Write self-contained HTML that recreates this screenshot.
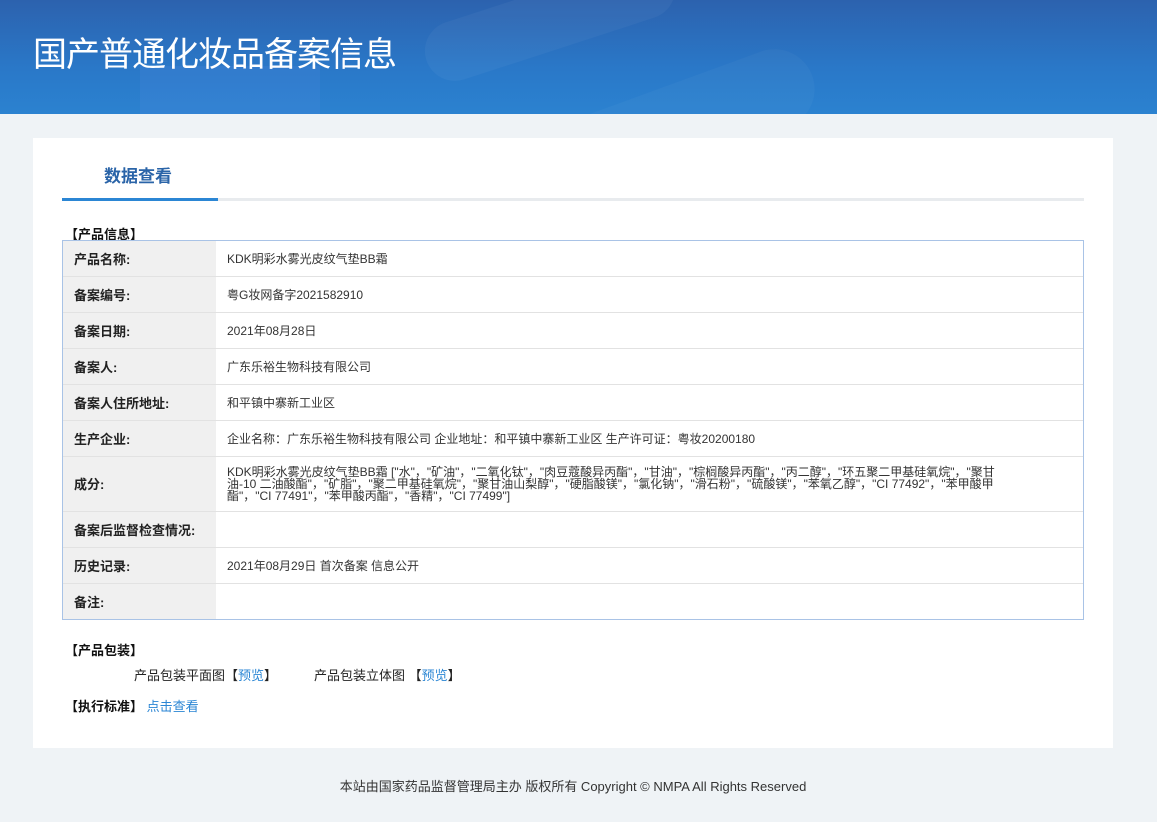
<!DOCTYPE html>
<html><head><meta charset="utf-8"><style>
*{margin:0;padding:0;box-sizing:border-box}
body{width:1157px;height:822px;background:#eff3f6;font-family:"Liberation Sans","Noto Sans CJK SC",sans-serif;position:relative;overflow:hidden;color:#333}
.hd{position:absolute;left:0;top:0;width:1157px;height:114px;background:linear-gradient(180deg,#2c62ae 0%,#2a78c8 60%,#2b82d0 100%);overflow:hidden}
.hd .s1{position:absolute;left:420px;top:-10px;width:260px;height:60px;border-radius:40px;background:rgba(255,255,255,.04);transform:rotate(-18deg)}
.hd .s2{position:absolute;left:140px;top:66px;width:180px;height:60px;background:rgba(90,140,230,.18)}
.hd .s4{position:absolute;left:560px;top:80px;width:260px;height:80px;border-radius:50px;background:rgba(255,255,255,.03);transform:rotate(-20deg)}
.hd h1{position:absolute;left:33px;top:27px;font-size:34px;font-weight:normal;color:#fff;letter-spacing:-1px}
.card{position:absolute;left:33px;top:138px;width:1080px;height:610px;background:#fff}
.tab{position:absolute;left:71px;top:24px;font-size:17px;font-weight:bold;color:#2a64a8}
.line{position:absolute;left:29px;top:60px;width:1022px;height:3px;background:#e8ebee}
.line i{position:absolute;left:0;top:0;width:156px;height:3px;background:#2b86d4}
.sec{position:absolute;font-size:13px;font-weight:bold;color:#111}
.tw{position:absolute;left:29px;top:102px;width:1022px;border:1px solid #a9c3e6}
table{width:100%;border-collapse:collapse}
td{border-top:1px solid #e2e2e2;font-size:12px;height:36px;vertical-align:middle}
tr:first-child td{border-top:none;height:35px}
td.l{width:153px;background:#f0f0f0;font-weight:bold;font-size:13px;padding-left:11px;color:#222}
td.v{padding-left:11px;color:#333}
.ing{line-height:12px;font-size:12px}
.a{color:#2b86d4}
.ft{position:absolute;top:776px;left:0;width:1146px;text-align:center;font-size:13px;color:#333}
</style></head><body>
<div class="hd"><div class="s1"></div><div class="s4"></div><div class="s2"></div><h1>国产普通化妆品备案信息</h1></div>
<div class="card">
<div class="tab">数据查看</div>
<div class="line"><i></i></div>
<div class="sec" style="left:32px;top:86px">【产品信息】</div>
<div class="tw"><table>
<tr><td class="l">产品名称:</td><td class="v">KDK明彩水雾光皮纹气垫BB霜</td></tr>
<tr><td class="l">备案编号:</td><td class="v">粤G妆网备字2021582910</td></tr>
<tr><td class="l">备案日期:</td><td class="v">2021年08月28日</td></tr>
<tr><td class="l">备案人:</td><td class="v">广东乐裕生物科技有限公司</td></tr>
<tr><td class="l">备案人住所地址:</td><td class="v">和平镇中寨新工业区</td></tr>
<tr><td class="l">生产企业:</td><td class="v">企业名称：广东乐裕生物科技有限公司 企业地址：和平镇中寨新工业区 生产许可证：粤妆20200180</td></tr>
<tr><td class="l" style="height:55px">成分:</td><td class="v ing">KDK明彩水雾光皮纹气垫BB霜 ["水"，"矿油"，"二氧化钛"，"肉豆蔻酸异丙酯"，"甘油"，"棕榈酸异丙酯"，"丙二醇"，"环五聚二甲基硅氧烷"，"聚甘<br>油-10 二油酸酯"，"矿脂"，"聚二甲基硅氧烷"，"聚甘油山梨醇"，"硬脂酸镁"，"氯化钠"，"滑石粉"，"硫酸镁"，"苯氧乙醇"，"CI 77492"，"苯甲酸甲<br>酯"，"CI 77491"，"苯甲酸丙酯"，"香精"，"CI 77499"]</td></tr>
<tr><td class="l">备案后监督检查情况:</td><td class="v"></td></tr>
<tr><td class="l">历史记录:</td><td class="v">2021年08月29日 首次备案 信息公开</td></tr>
<tr><td class="l">备注:</td><td class="v"></td></tr>
</table></div>
<div class="sec" style="left:32px;top:502px">【产品包装】</div>
<div style="position:absolute;left:101px;top:527px;font-size:13px;color:#222">产品包装平面图【<span class="a">预览</span>】</div>
<div style="position:absolute;left:281px;top:527px;font-size:13px;color:#222">产品包装立体图 【<span class="a">预览</span>】</div>
<div class="sec" style="left:32px;top:558px">【执行标准】 <span class="a" style="font-weight:normal">点击查看</span></div>
</div>
<div class="ft">本站由国家药品监督管理局主办 版权所有 Copyright © NMPA All Rights Reserved</div>
</body></html>
